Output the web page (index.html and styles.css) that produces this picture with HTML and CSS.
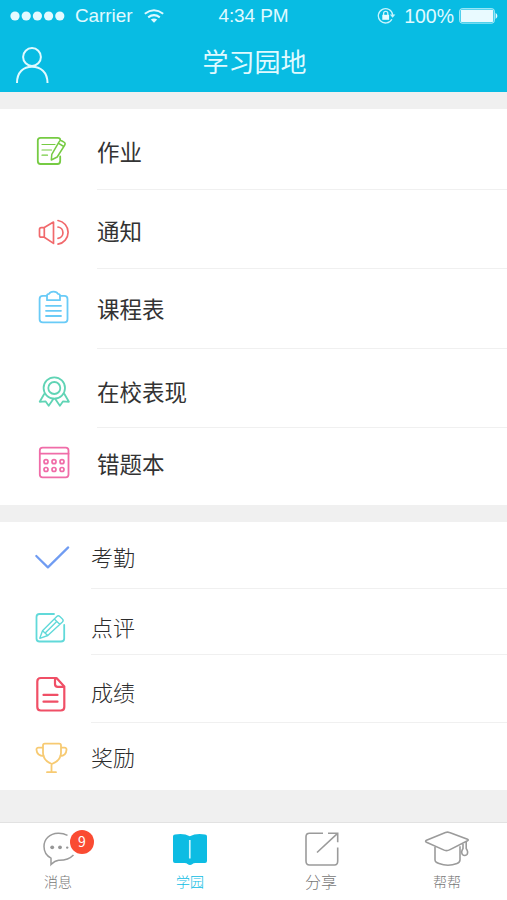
FILE: index.html
```html
<!DOCTYPE html>
<html lang="zh-CN">
<head>
<meta charset="utf-8">
<title>学习园地</title>
<link rel="stylesheet" href="styles.css">
</head>
<body>
<header class="header">
  <div class="status">
    <div class="status-left">
      <svg width="56" height="12" viewBox="0 0 56 12" fill="#e4faff"><circle cx="5" cy="6" r="4.6"/><circle cx="16.2" cy="6" r="4.6"/><circle cx="27.4" cy="6" r="4.6"/><circle cx="38.6" cy="6" r="4.6"/><circle cx="49.8" cy="6" r="4.6"/></svg>
      <span class="carrier">Carrier</span>
      <svg class="wifi" width="20" height="14" viewBox="0 0 20 14" fill="none" stroke="#dff9ff" stroke-width="2"><path d="M.8 4.7Q10-2.3 19.2 4.7M4.2 8.4Q10 3.9 15.8 8.4"/><path d="M6.8 10.6Q10 8.2 13.2 10.6L10 13.8Z" fill="#dff9ff" stroke="none"/></svg>
    </div>
    <span class="time">4:34 PM</span>
    <div class="status-right">
      <svg width="20" height="18" viewBox="0 0 20 18" fill="none" stroke="#c8f4fd" stroke-width="1.3"><path d="M14.9 12.2A7.2 7.2 0 1 1 15.7 8"/><path d="M12.8 7.6h5.6l-2.8 3.2z" fill="#c8f4fd" stroke="none"/><path d="M6.6 8V6.5a2.1 2.1 0 0 1 4.2 0V8"/><path d="M5.3 7.8h6.8v5H5.3z" fill="#e6fbff" stroke="none"/></svg>
      <span class="percent">100%</span>
      <svg class="battery" width="40" height="16" viewBox="0 0 40 16"><rect x=".7" y=".7" width="34.6" height="14.4" rx="2.4" fill="none" stroke="#b9f0fb"/><rect x="1.8" y="1.8" width="32.4" height="12.2" rx="1" fill="#e9faff"/><path d="M36.6 4.8q3.6 3.1 0 6.2z" fill="#e9faff"/></svg>
    </div>
  </div>
  <div class="nav">
    <svg class="user" width="36" height="38" viewBox="14 46 36 38" fill="none" stroke="#e0faff" stroke-width="2"><circle cx="32" cy="57" r="8.9"/><path d="M17 83C17 72 23.5 66.7 32 66.7S47.5 72 47.5 83"/></svg>
    <h1 class="title">学习园地</h1>
  </div>
</header>
<main>
  <section class="list primary">
    <div class="row homework">
      <svg class="icon" viewBox="0 109 97 81" stroke="#76cb43"><path d="M60.2 139.800q0-1.900-2.600-1.900H40.500q-2.700 0-2.700 2.700V161q0 3 2.700 3h17q2.700 0 2.700-3v-4.500"/><path d="M42 144.500h13M42 150h9.500M42 155.200h5.500" stroke-width="1.200"/><path d="M51.800 154.300l7.400-12.600q1-1.800 2.800-.7l2 1.200q1.800 1 .8 2.800l-7.600 12-5.900 3zM58.600 143.300l5.200 3.200" stroke-width="1.500"/></svg>
      <span class="label">作业</span>
    </div>
    <div class="row notice">
      <svg class="icon" viewBox="0 190 97 79" stroke="#f1696c"><path d="M44.300 227.600h-3q-1.800 0-1.800 1.800v6q0 1.800 1.800 1.800h3zM44.300 227.600l9.200-5.500v21.300l-9.200-6.200M58 220.500a12 12 0 0 1 0 23.700M58 227a5.700 5.700 0 0 1 0 11.300" stroke-width="1.700"/></svg>
      <span class="label">通知</span>
    </div>
    <div class="row schedule">
      <svg class="icon" viewBox="0 269 97 80" stroke="#69cbf7"><path d="M47 295.800h-4.200q-3.200 0-3.200 3.200v20.200q0 3.200 3.200 3.200h21.500q3.200 0 3.200-3.200V299q0-3.200-3.200-3.200H60"/><path d="M47 300.200v-4.700q0-1.700 2.200-1.700.8-2.200 4.300-2.200t4.300 2.200q2.200 0 2.200 1.700v4.700zM46 305.800h15M46 310.800h15M46 316h15"/></svg>
      <span class="label">课程表</span>
    </div>
    <div class="row behavior">
      <svg class="icon" viewBox="0 349 97 79" stroke="#60d4b5"><circle cx="54.300" cy="388" r="10.700"/><circle cx="54.300" cy="388" r="6"/><path d="M44.200 394l-4.500 7.800 6-.4 3 4.300 4.800-7M64.400 394l4.500 7.800-6-.4-3 4.300-4.800-7"/></svg>
      <span class="label">在校表现</span>
    </div>
    <div class="row mistakes">
      <svg class="icon" viewBox="0 428 97 77" stroke="#f06ca8"><rect x="39.800" y="447.600" width="28.700" height="29.700" rx="2.800"/><path d="M40 453.700h28.500"/><g stroke-width="1.700"><circle cx="46" cy="461.700" r="2"/><circle cx="54" cy="461.700" r="2"/><circle cx="62" cy="461.700" r="2"/><circle cx="46" cy="469.500" r="2"/><circle cx="54" cy="469.500" r="2"/><circle cx="62" cy="469.500" r="2"/></g></svg>
      <span class="label">错题本</span>
    </div>
  </section>
  <section class="list secondary">
    <div class="row attendance">
      <svg class="icon" viewBox="0 522 91 67" stroke="#709cf2"><path d="M36.300 556l11.600 11.400 20.300-20"/></svg>
      <span class="label">考勤</span>
    </div>
    <div class="row review">
      <svg class="icon" viewBox="0 589 91 66" stroke="#61d9d9"><path d="M54 614H39.500q-3 0-3 3v21.500q0 3 3 3H61q3.200 0 3.200-3V625"/><path d="M39.800 638.300l2.700-7.600 14.300-14.200q1.500-1.500 3 0l2.600 2.500q1.500 1.500 0 3L47.800 635.500zM42.500 630.700l5.300 4.800M54.300 619l5.400 5.300M45.700 632.500l11-11" stroke-width="1.400"/></svg>
      <span class="label">点评</span>
    </div>
    <div class="row grades">
      <svg class="icon" viewBox="0 655 91 68" stroke="#f04f66"><path d="M55.500 678H40.800q-3.500 0-3.500 3.500v25.500q0 3.500 3.500 3.500h20q3.500 0 3.500-3.500V686.500L56.500 678q-1.500 0-1.500 2v4q0 2.800 2.800 2.800h6.200M43.500 694.900h14M43.500 701.700h14"/></svg>
      <span class="label">成绩</span>
    </div>
    <div class="row rewards">
      <svg class="icon" viewBox="0 723 91 67" stroke="#f7ca72"><path d="M43 745.500q0-1.800 1.800-1.800h14.400q1.800 0 1.800 1.800v7.500q0 7.500-9.200 11-8.800-3.500-8.800-11zM43 747.700h-4.500q-2.200 0-2 2.200.4 6 7.500 6.200M61 747.700h3.500q2.200 0 2 2.200-.4 6-6.500 6.200M51.500 764v8M47 772.200h9"/></svg>
      <span class="label">奖励</span>
    </div>
  </section>
</main>
<nav class="tabs">
  <a class="tab messages">
    <svg class="tab-icon" viewBox="36 827 60 42" fill="none" stroke="#9b9b9b" stroke-width="1.500"><path d="M67.500 835.300Q63 833 58 833.200c-8.500.3-14 6.300-14 13.300 0 5.300 2.500 9.300 7 11.600v6.500q3.800-4 7.700-4.300 9.500.2 14.800-5.300"/><g fill="#969696" stroke="none"><circle cx="52.200" cy="847.300" r="1.900"/><circle cx="60" cy="847.300" r="1.900"/><circle cx="67.200" cy="847.600" r="1.200"/></g></svg>
    <span class="badge">9</span>
    <span class="tab-label">消息</span>
  </a>
  <a class="tab garden">
    <svg class="tab-icon" viewBox="160 827 60 42"><path d="M173 836.500q0-2 2-2 9-1.500 14.800 1.800Q196 833 205 834.500q2 0 2 2v24.500q0 2-2 2h-9.500q-2.300 0-3 1-2.500 2-5 0-.8-1-3-1H175q-2 0-2-2z" fill="#0dbce3"/><path d="M189.800 840v18.500" stroke="#ccf5fc" stroke-width="1.700"/></svg>
    <span class="tab-label">学园</span>
  </a>
  <a class="tab share">
    <svg class="tab-icon" viewBox="291 827 60 42" fill="none" stroke="#9b9b9b" stroke-width="1.600"><path d="M323 833.300h-13.500q-3.500 0-3.500 3.500V861q0 4 3.500 4h25q3.200 0 3.200-4v-13.500M328 833.300h9.700v9M337.300 833.700L317 852.500"/></svg>
    <span class="tab-label">分享</span>
  </a>
  <a class="tab help">
    <svg class="tab-icon" viewBox="417 827 60 42" fill="none" stroke="#9b9b9b" stroke-width="1.600"><path d="M426.500 840.300l19-7.800q2-.8 4 0l18 6.700q1.500.9 0 1.600l-17.500 8.800q-3.500 2-7 0l-16.500-7.300q-1.800-1 0-2z"/><path d="M435 846.800v13q0 2.500 4 3.700 9 3.500 18 0 3-1 3-3.700v-13.500M466.200 842v6.500q2.400 3.500.8 6-2.500 2-4.600 0-1.700-2.500.6-6v-4.500"/></svg>
    <span class="tab-label">帮帮</span>
  </a>
</nav>
</body>
</html>
```
FILE: styles.css
```css
* { box-sizing: border-box; }

body {
  margin: 0;
  height: 900px;
  display: flex;
  flex-direction: column;
  background: #f0f0f0;
  font-family: "Liberation Sans", "Noto Sans CJK SC", sans-serif;
  overflow: hidden;
}

svg { display: block; flex: none; }

.header {
  height: 92px;
  background: #08bce3;
  color: #e0faff;
}

.status {
  height: 32px;
  display: grid;
  grid-template-columns: 1fr auto 1fr;
  align-items: center;
  padding: 0 8px 0 10px;
  font-size: 19px;
  line-height: 32px;
}

.status-left,
.status-right { display: flex; align-items: center; }
.status-right { justify-content: flex-end; }
.carrier { margin-left: 9px; width: 59px; letter-spacing: -.1px; }
.wifi { margin-left: 10px; }
.time { letter-spacing: -.1px; margin: -1px 2px 0 0; }
.percent { margin: 0 5px 0 7px; font-size: 19.5px; }

.nav {
  height: 60px;
  display: grid;
  grid-template-columns: 50px 1fr 48px;
}

.user { margin: 14px 0 0 14px; }

.title {
  margin: 0;
  padding-top: 11px;
  text-align: center;
  font-size: 26px;
  line-height: 40px;
  font-weight: 400;
}

.list {
  margin-top: 17px;
  background: #fff;
}

.row {
  display: grid;
  grid-template-columns: 97px 1fr;
}
.secondary .row { grid-template-columns: 91px 1fr; }

.icon {
  width: 100%;
  height: 100%;
  fill: none;
  stroke-width: 1.8;
  stroke-linecap: round;
  stroke-linejoin: round;
}
.attendance .icon,
.grades .icon { stroke-width: 2.2; }

.label {
  border-bottom: 1px solid #f0f0f0;
  font-size: 22.5px;
  line-height: 30px;
  color: #333;
}
.secondary .label { font-size: 22px; font-weight: 300; color: #2c2c2c; }
.row:last-child .label { border-bottom: 0; }

.homework { height: 81px; }
.homework .label { padding-top: 30px; }
.notice { height: 79px; }
.notice .label { padding-top: 28px; }
.schedule { height: 80px; }
.schedule .label { padding-top: 27px; }
.behavior { height: 79px; }
.behavior .label { padding-top: 30px; }
.mistakes { height: 77px; }
.mistakes .label { padding-top: 23px; }
.attendance { height: 67px; }
.attendance .label { padding-top: 22px; }
.review { height: 66px; }
.review .label { padding-top: 25px; }
.grades { height: 68px; }
.grades .label { padding-top: 24px; }
.rewards { height: 67px; }
.rewards .label { padding-top: 21px; }

.tabs {
  margin-top: auto;
  height: 78px;
  border-top: 1px solid #e2e2e2;
  background: #fff;
  display: grid;
  grid-template-columns: 124px 132px 130px 121px;
}

.tab {
  position: relative;
  display: flex;
  flex-direction: column;
  padding-top: 4px;
  color: #777;
}
.messages { padding-left: 36px; }
.garden { padding-left: 36px; color: #0dbce3; }
.share { padding-left: 35px; }
.help { padding-left: 31px; }

.tab-icon { width: 60px; height: 42px; }

.tab-label {
  width: 60px;
  padding-top: 1px;
  text-align: center;
  font-size: 14px;
  font-weight: 300;
  line-height: 24px;
}
.messages .tab-label { width: 44px; }
.share .tab-label { padding-top: 2px; font-size: 16px; }

.badge {
  position: absolute;
  left: 70px;
  top: 7px;
  width: 24px;
  height: 24px;
  border-radius: 50%;
  background: #fa4b32;
  color: #fff;
  font-family: "Noto Sans CJK SC", sans-serif;
  font-size: 14px;
  line-height: 23px;
  text-align: center;
}
```
